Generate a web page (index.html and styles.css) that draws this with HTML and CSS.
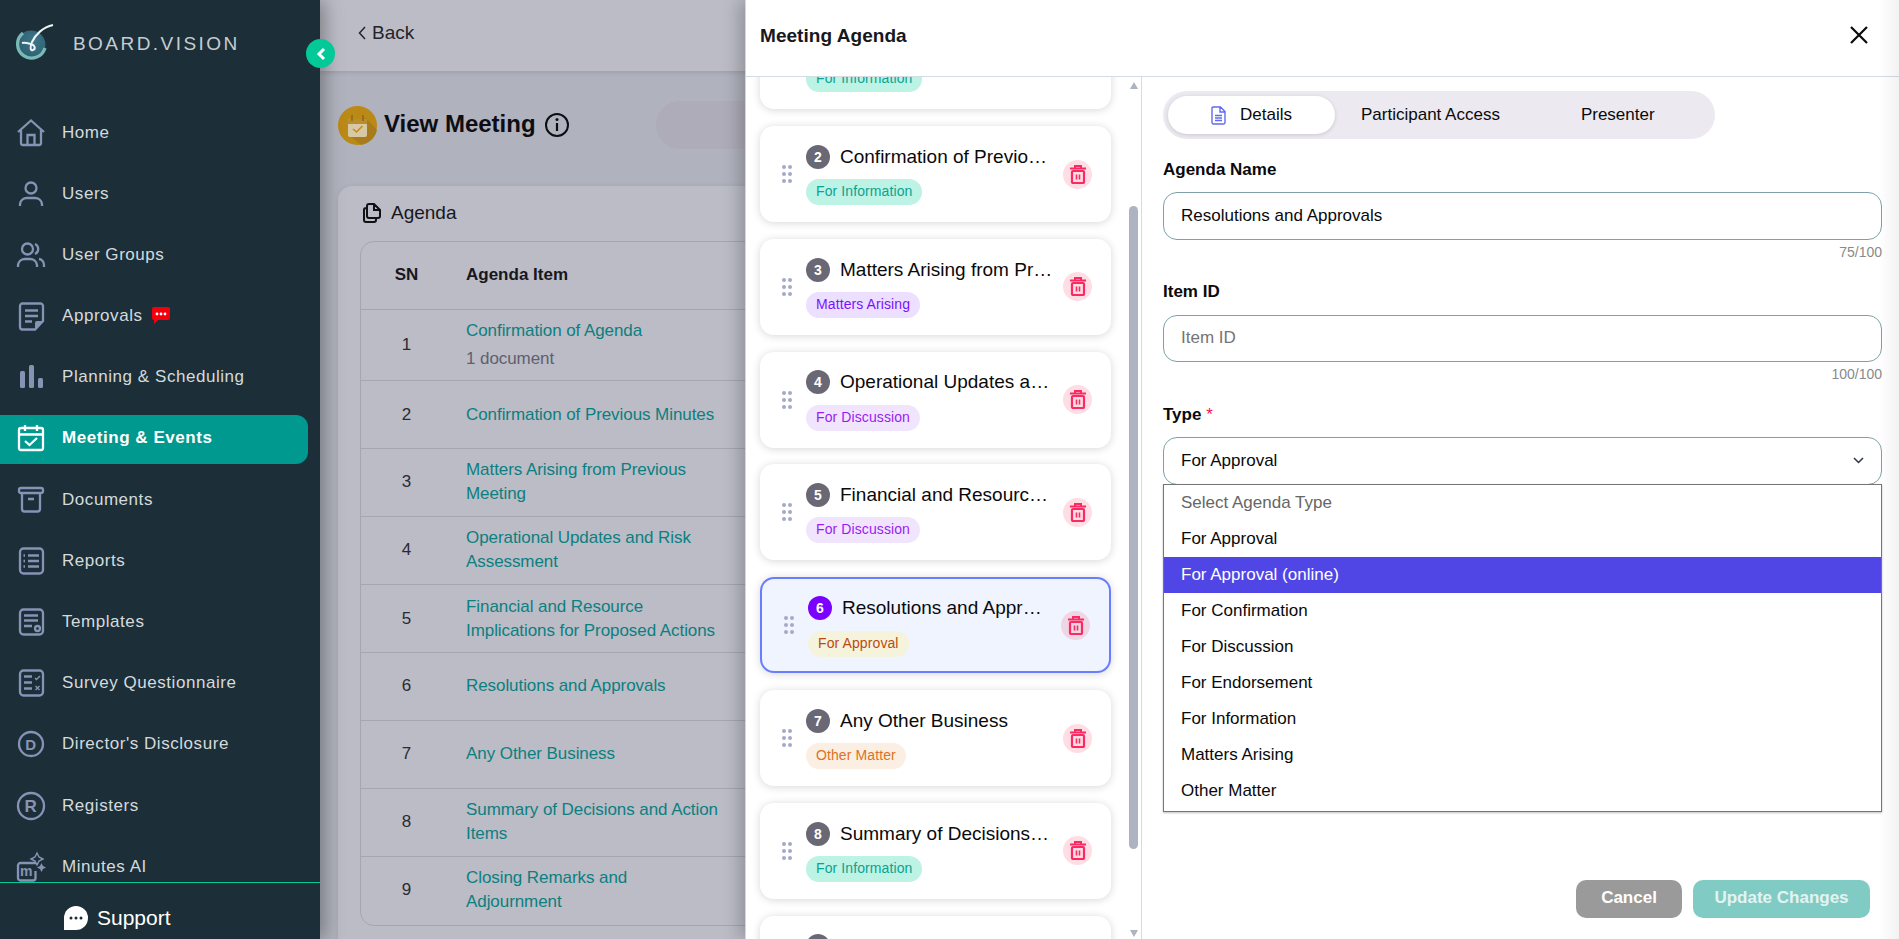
FILE: index.html
```html
<!DOCTYPE html>
<html>
<head>
    <meta charset="UTF-8">
    <title>Meeting Agenda</title>
    <link rel="stylesheet" href="styles.css">
</head>
<body>
    <svg class="sprite" width="0" height="0">
        <symbol id="trash" viewBox="0 0 16 19">
            <path d="M0 3.500H16M5 3V1H11V3" fill="none" stroke="currentColor" stroke-width="2"/>
            <rect x="2" y="6" width="12" height="12" rx="1" fill="none" stroke="currentColor" stroke-width="2.200"/>
            <path d="M6.500 9.500V14.500M9.500 9.500V14.500" fill="none" stroke="currentColor" stroke-width="1.600"/>
        </symbol>
        <symbol id="grip" viewBox="0 0 10 18">
            <circle cx="2" cy="2" r="2"/><circle cx="8" cy="2" r="2"/>
            <circle cx="2" cy="9" r="2"/><circle cx="8" cy="9" r="2"/>
            <circle cx="2" cy="16" r="2"/><circle cx="8" cy="16" r="2"/>
        </symbol>
    </svg>

    <div class="app">
        <aside class="sidebar">
            <div class="brand">
                <svg class="brand-logo" width="42" height="36" viewBox="0 0 42 36">
                    <defs>
                        <radialGradient id="globe" cx="0.6" cy="0.35" r="0.75">
                            <stop offset="0" stop-color="#3d7488"/>
                            <stop offset="1" stop-color="#2a5c6c"/>
                        </radialGradient>
                    </defs>
                    <circle cx="15" cy="21" r="14.500" fill="url(#globe)"/>
                    <path d="M7 9A14 14 0 1 0 29 24" fill="none" stroke="#82c4bf" stroke-width="3.200" opacity="0.9"/>
                    <path d="M37 1C27 3 19 11 16 18C14 23 14 27 17 26C20 25 19 21 15 20C13 19.500 9 18 6 19" fill="none" stroke="#eef5f4" stroke-width="2"/>
                </svg>
                <span class="brand-name">BOARD.VISION</span>
            </div>
            <nav class="nav">
                <a class="nav-item">
                    <svg class="nav-icon" viewBox="0 0 28 28"><path d="M1 13L14 1.500L27 13M4 10.500V24A2 2 0 0 0 6 26H22A2 2 0 0 0 24 24V10.500M10.500 26V16H17.500V26"/></svg>
                    <span>Home</span>
                </a>
                <a class="nav-item">
                    <svg class="nav-icon" viewBox="0 0 28 28"><circle cx="14" cy="8" r="5.500"/><path d="M3 26V24A7 7 0 0 1 10 18H18A7 7 0 0 1 25 24V26"/></svg>
                    <span>Users</span>
                </a>
                <a class="nav-item">
                    <svg class="nav-icon" viewBox="0 0 28 28"><circle cx="10.500" cy="8" r="5.500"/><path d="M1 26V24A7 7 0 0 1 8 18H13A7 7 0 0 1 20 24V26M18 3A5.500 5.500 0 0 1 18 13M22 18A6 6 0 0 1 27 24V26"/></svg>
                    <span>User Groups</span>
                </a>
                <a class="nav-item">
                    <svg class="nav-icon" viewBox="0 0 28 28"><path d="M26 19V4A2.500 2.500 0 0 0 23.500 1.500H5.500A2.500 2.500 0 0 0 3 4V25A2.500 2.500 0 0 0 5.500 27.500H18ZM8 8.500H21M8 14H21M8 19.500H15"/><path class="nav-fill" d="M26 19L18 27.500V21A2 2 0 0 1 20 19Z"/></svg>
                    <span>Approvals</span>
                    <svg class="chat-badge" width="18" height="18" viewBox="0 0 18 18">
                        <path d="M2 0H16A2 2 0 0 1 18 2V11A2 2 0 0 1 16 13H6L2 17V13A2 2 0 0 1 0 11V2A2 2 0 0 1 2 0Z" fill="#f3000f"/>
                        <circle cx="5" cy="7" r="1.400" fill="#fff"/><circle cx="9" cy="7" r="1.400" fill="#fff"/><circle cx="13" cy="7" r="1.400" fill="#fff"/>
                    </svg>
                </a>
                <a class="nav-item">
                    <svg class="nav-icon" viewBox="0 0 28 28"><rect class="nav-fill" x="3" y="8" width="5" height="17" rx="1.500"/><rect class="nav-fill" x="12" y="2" width="5" height="23" rx="1.500"/><rect class="nav-fill" x="21" y="15" width="5" height="10" rx="1.500"/></svg>
                    <span>Planning &amp; Scheduling</span>
                </a>
                <a class="nav-item active">
                    <svg class="nav-icon" viewBox="0 0 28 28"><rect x="2" y="4" width="24" height="22" rx="2"/><path d="M2 10.500H26M8 1V7M20 1V7M8 17L12.500 21L20 14"/></svg>
                    <span>Meeting &amp; Events</span>
                </a>
                <a class="nav-item">
                    <svg class="nav-icon" viewBox="0 0 28 28"><rect x="2" y="2" width="24" height="5" rx="2"/><path d="M5 7V23A2.500 2.500 0 0 0 7.500 25.500H20.500A2.500 2.500 0 0 0 23 23V7M11 13H17"/></svg>
                    <span>Documents</span>
                </a>
                <a class="nav-item">
                    <svg class="nav-icon" viewBox="0 0 28 28"><rect x="3" y="1.500" width="23" height="25" rx="3.500"/><path d="M11 8.500H22M11 14H22M11 19.500H22M6.500 8.500H8M6.500 14H8M6.500 19.500H8"/></svg>
                    <span>Reports</span>
                </a>
                <a class="nav-item">
                    <svg class="nav-icon" viewBox="0 0 28 28"><rect x="3" y="1.500" width="23" height="25" rx="3.500"/><path d="M7 7.500H21M7 12.500H21M7 18H15"/><circle cx="20.500" cy="20.500" r="2.500"/></svg>
                    <span>Templates</span>
                </a>
                <a class="nav-item">
                    <svg class="nav-icon" viewBox="0 0 28 28"><rect x="3" y="1.500" width="23" height="25" rx="3.500"/><path d="M7 7.500H15M7 13.500H15M7 19.500H15"/><path class="nav-thin" d="M18 9L19.500 10.500L23 7M18.500 17L22.500 21M22.500 17L18.500 21"/></svg>
                    <span>Survey Questionnaire</span>
                </a>
                <a class="nav-item">
                    <svg class="nav-icon" viewBox="0 0 28 28"><circle cx="14" cy="14" r="12"/><text class="nav-letter" x="14" y="19.500" font-size="15">D</text></svg>
                    <span>Director's Disclosure</span>
                </a>
                <a class="nav-item">
                    <svg class="nav-icon" viewBox="0 0 28 28"><circle cx="14" cy="14" r="13"/><text class="nav-letter" x="14" y="20" font-size="17">R</text></svg>
                    <span>Registers</span>
                </a>
                <a class="nav-item">
                    <svg class="nav-icon" viewBox="0 0 28 28"><path d="M19 10H3.500A2.500 2.500 0 0 0 1 12.500V25A2.500 2.500 0 0 0 3.500 27.500H16A2.500 2.500 0 0 0 18.500 25V18"/><text class="nav-letter" x="9.500" y="23" font-size="14">m</text><path class="nav-thin" d="M20 0L22 4L26 6L22 8L20 12L18 8L14 6L18 4Z"/><path class="nav-fill" d="M24.500 10L26 13L29 14.500L26 16L24.500 19L23 16L20 14.500L23 13Z"/></svg>
                    <span>Minutes AI</span>
                </a>
            </nav>
            <div class="support">
                <svg width="24" height="24" viewBox="0 0 24 24">
                    <path d="M12 0A12 12 0 1 1 12 24H0V12A12 12 0 0 1 12 0Z" fill="#fff"/>
                    <circle cx="7" cy="12" r="1.500" fill="#1c2f38"/><circle cx="12" cy="12" r="1.500" fill="#1c2f38"/><circle cx="17" cy="12" r="1.500" fill="#1c2f38"/>
                </svg>
                <span>Support</span>
            </div>
            <button class="collapse-toggle">
                <svg width="10" height="14" viewBox="0 0 10 14"><path d="M8 2L3 7L8 12" fill="none" stroke="#fff" stroke-width="3"/></svg>
            </button>
        </aside>

        <main class="main">
            <div class="topbar">
                <svg width="8" height="14" viewBox="0 0 8 14"><path d="M7 1L1.500 7L7 13" fill="none" stroke="#23242c" stroke-width="1.500"/></svg>
                <span>Back</span>
            </div>
            <div class="page-title">
                <svg width="39" height="39" viewBox="0 0 39 39">
                    <circle cx="19.500" cy="19.500" r="19.500" fill="#bb8916"/>
                    <path d="M10 15L28 12L39 24A19.500 19.500 0 0 1 23 39L10 28Z" fill="#a87c1c"/>
                    <path d="M12 13H27A2 2 0 0 1 29 15V29A2 2 0 0 1 27 31H12A2 2 0 0 1 10 29V15A2 2 0 0 1 12 13Z" fill="#d8c9a6"/>
                    <path d="M10 15A2 2 0 0 1 12 13H27A2 2 0 0 1 29 15V18H10Z" fill="#b98c2c"/>
                    <path d="M14 9V15M25 9V15" stroke="#8d6a1e" stroke-width="1.500"/>
                    <path d="M15 23L18.500 26L24.500 20" fill="none" stroke="#c68c18" stroke-width="1.600"/>
                </svg>
                <h1>View Meeting</h1>
                <svg class="info-icon" width="24" height="24" viewBox="0 0 24 24">
                    <circle cx="12" cy="12" r="11" fill="none" stroke="#0d0d12" stroke-width="2"/>
                    <path d="M12 10V18" stroke="#0d0d12" stroke-width="2.200"/>
                    <circle cx="12" cy="6.500" r="1.500" fill="#0d0d12"/>
                </svg>
                <div class="title-pill"></div>
            </div>
            <section class="agenda-card">
                <div class="agenda-head">
                    <svg width="18" height="20" viewBox="0 0 18 20">
                        <path d="M6 1H11L17 7V13A2 2 0 0 1 15 15H6A2 2 0 0 1 4 13V3A2 2 0 0 1 6 1Z M4 5H3A2 2 0 0 0 1 7V17A2 2 0 0 0 3 19H11A2 2 0 0 0 13 17V15 M11 1V7H17" fill="none" stroke="#101015" stroke-width="2"/>
                    </svg>
                    <span>Agenda</span>
                </div>
                <div class="table-box">
                    <table class="agenda-table">
                        <thead>
                            <tr><th class="col-sn">SN</th><th class="col-item">Agenda Item</th></tr>
                        </thead>
                        <tbody>
                            <tr class="row-first row-low"><td class="col-sn">1</td><td class="col-item"><a>Confirmation of Agenda</a><div class="doc-count">1 document</div></td></tr>
                            <tr class="row-low"><td class="col-sn">2</td><td class="col-item"><a>Confirmation of Previous Minutes</a></td></tr>
                            <tr><td class="col-sn">3</td><td class="col-item"><a>Matters Arising from Previous Meeting</a></td></tr>
                            <tr><td class="col-sn">4</td><td class="col-item"><a>Operational Updates and Risk Assessment</a></td></tr>
                            <tr class="row-low"><td class="col-sn">5</td><td class="col-item"><a>Financial and Resource Implications for Proposed Actions</a></td></tr>
                            <tr><td class="col-sn">6</td><td class="col-item"><a>Resolutions and Approvals</a></td></tr>
                            <tr><td class="col-sn">7</td><td class="col-item"><a>Any Other Business</a></td></tr>
                            <tr><td class="col-sn">8</td><td class="col-item"><a>Summary of Decisions and Action Items</a></td></tr>
                            <tr><td class="col-sn">9</td><td class="col-item"><a>Closing Remarks and Adjournment</a></td></tr>
                        </tbody>
                    </table>
                </div>
            </section>

            <div class="drawer">
                <header class="drawer-head">
                    <h2>Meeting Agenda</h2>
                    <svg width="18" height="18" viewBox="0 0 18 18"><path d="M1 1L17 17M17 1L1 17" stroke="#0a0a0a" stroke-width="2.200"/></svg>
                </header>
                <div class="drawer-body">
                    <div class="list-pane">
                        <div class="card-list">
                            <div class="card">
                                <svg class="grip"><use href="#grip"/></svg>
                                <div class="card-body">
                                    <div class="card-title"><span class="num">1</span><span class="name">Confirmation of Agenda</span></div>
                                    <span class="tag tag-info">For Information</span>
                                </div>
                                <div class="trash"><svg><use href="#trash"/></svg></div>
                            </div>
                            <div class="card">
                                <svg class="grip"><use href="#grip"/></svg>
                                <div class="card-body">
                                    <div class="card-title"><span class="num">2</span><span class="name">Confirmation of Previous Minutes</span></div>
                                    <span class="tag tag-info">For Information</span>
                                </div>
                                <div class="trash"><svg><use href="#trash"/></svg></div>
                            </div>
                            <div class="card">
                                <svg class="grip"><use href="#grip"/></svg>
                                <div class="card-body">
                                    <div class="card-title"><span class="num">3</span><span class="name">Matters Arising from Previous Meeting</span></div>
                                    <span class="tag tag-matters">Matters Arising</span>
                                </div>
                                <div class="trash"><svg><use href="#trash"/></svg></div>
                            </div>
                            <div class="card">
                                <svg class="grip"><use href="#grip"/></svg>
                                <div class="card-body">
                                    <div class="card-title"><span class="num">4</span><span class="name">Operational Updates and Risk Assessment</span></div>
                                    <span class="tag tag-discussion">For Discussion</span>
                                </div>
                                <div class="trash"><svg><use href="#trash"/></svg></div>
                            </div>
                            <div class="card">
                                <svg class="grip"><use href="#grip"/></svg>
                                <div class="card-body">
                                    <div class="card-title"><span class="num">5</span><span class="name">Financial and Resource Implications for Proposed Actions</span></div>
                                    <span class="tag tag-discussion">For Discussion</span>
                                </div>
                                <div class="trash"><svg><use href="#trash"/></svg></div>
                            </div>
                            <div class="card selected">
                                <svg class="grip"><use href="#grip"/></svg>
                                <div class="card-body">
                                    <div class="card-title"><span class="num">6</span><span class="name">Resolutions and Approvals</span></div>
                                    <span class="tag tag-approval">For Approval</span>
                                </div>
                                <div class="trash"><svg><use href="#trash"/></svg></div>
                            </div>
                            <div class="card">
                                <svg class="grip"><use href="#grip"/></svg>
                                <div class="card-body">
                                    <div class="card-title"><span class="num">7</span><span class="name">Any Other Business</span></div>
                                    <span class="tag tag-other">Other Matter</span>
                                </div>
                                <div class="trash"><svg><use href="#trash"/></svg></div>
                            </div>
                            <div class="card">
                                <svg class="grip"><use href="#grip"/></svg>
                                <div class="card-body">
                                    <div class="card-title"><span class="num">8</span><span class="name">Summary of Decisions and Action Items</span></div>
                                    <span class="tag tag-info">For Information</span>
                                </div>
                                <div class="trash"><svg><use href="#trash"/></svg></div>
                            </div>
                            <div class="card">
                                <svg class="grip"><use href="#grip"/></svg>
                                <div class="card-body">
                                    <div class="card-title"><span class="num">9</span><span class="name">Closing Remarks and Adjournment</span></div>
                                    <span class="tag tag-info">For Information</span>
                                </div>
                                <div class="trash"><svg><use href="#trash"/></svg></div>
                            </div>
                        </div>
                        <div class="scroll-rail">
                            <span class="arrow-up"></span>
                            <span class="thumb"></span>
                            <span class="arrow-down"></span>
                        </div>
                    </div>

                    <div class="form-pane">
                        <div class="tabs">
                            <div class="tab active">
                                <svg width="15" height="19" viewBox="0 0 15 19"><path d="M2 1H9.500L14 5.500V16.500A1.500 1.500 0 0 1 12.500 18H2.500A1.500 1.500 0 0 1 1 16.500V2A1 1 0 0 1 2 1ZM9 1V6H14M4 9.500H11M4 12H11M4 14.500H11" fill="none" stroke="#5f6cf0" stroke-width="1.400"/></svg>
                                Details
                            </div>
                            <div class="tab tab-access">Participant Access</div>
                            <div class="tab tab-presenter">Presenter</div>
                        </div>

                        <label class="field-label first">Agenda Name</label>
                        <input class="text-input" type="text" value="Resolutions and Approvals">
                        <div class="counter">75/100</div>

                        <label class="field-label">Item ID</label>
                        <input class="text-input" type="text" placeholder="Item ID">
                        <div class="counter">100/100</div>

                        <label class="field-label">Type <span class="req">*</span></label>
                        <div class="select-wrap">
                            <div class="select-box">
                                For Approval
                                <svg width="11" height="7" viewBox="0 0 11 7"><path d="M1 1L5.500 5.500L10 1" fill="none" stroke="#2b3440" stroke-width="1.500"/></svg>
                            </div>
                            <ul class="options">
                                <li class="muted">Select Agenda Type</li>
                                <li>For Approval</li>
                                <li class="hover">For Approval (online)</li>
                                <li>For Confirmation</li>
                                <li>For Discussion</li>
                                <li>For Endorsement</li>
                                <li>For Information</li>
                                <li>Matters Arising</li>
                                <li>Other Matter</li>
                            </ul>
                        </div>

                        <div class="form-actions">
                            <button class="btn btn-cancel">Cancel</button>
                            <button class="btn btn-update">Update Changes</button>
                        </div>
                    </div>
                </div>
            </div>
        </main>
    </div>
</body>
</html>
```
FILE: styles.css
```css
* {
    box-sizing: border-box;
}
html, body {
    margin: 0;
    height: 100%;
    overflow: hidden;
}
body {
    font-family: "Liberation Sans", Arial, sans-serif;
    font-size: 17px;
    color: #0a0a0a;
}
.sprite {
    position: absolute;
}
.app {
    display: flex;
    height: 100vh;
}

/* sidebar */
.sidebar {
    position: relative;
    z-index: 2;
    width: 320px;
    flex: none;
    display: flex;
    flex-direction: column;
    background-color: #1c2f38;
    box-shadow: 4px 0 18px rgba(0, 0, 0, 0.35);
}
.brand {
    display: flex;
    align-items: center;
    height: 109px;
    padding: 0 0 21px 16px;
    flex: none;
}
.brand-logo {
    flex: none;
    margin-top: -4px;
}
.brand-name {
    margin-left: 15px;
    font-size: 19px;
    letter-spacing: 2.45px;
    color: #c6cdd1;
}
.nav {
    flex: 1;
    min-height: 0;
    overflow: hidden;
    padding-right: 12px;
}
.nav-item {
    display: flex;
    align-items: center;
    height: 49px;
    margin-bottom: 12.2px;
    padding: 0 0 2px 17px;
    border-radius: 0 12px 12px 0;
    color: #d5dadd;
    letter-spacing: 0.55px;
}
.nav-item.active {
    background-color: #009990;
    color: #fff;
    font-weight: bold;
}
.nav-icon {
    width: 28px;
    height: 28px;
    flex: none;
    margin-right: 17px;
    fill: none;
    stroke: #8793b5;
    stroke-width: 2.3;
    overflow: visible;
}
.nav-item.active .nav-icon {
    stroke: #fff;
}
.nav-icon .nav-fill {
    fill: #8793b5;
    stroke: none;
}
.nav-icon .nav-thin {
    stroke-width: 1.4;
}
.nav-letter {
    fill: #8793b5;
    stroke: none;
    font-weight: bold;
    text-anchor: middle;
}
.chat-badge {
    margin: 0 0 0 9px;
}
.support {
    height: 57px;
    flex: none;
    display: flex;
    align-items: center;
    gap: 9px;
    padding: 14px 0 0 64px;
    border-top: 1px solid #05c998;
    background-color: #1c2f38;
    color: #fff;
    font-size: 21px;
}
.collapse-toggle {
    position: absolute;
    top: 39px;
    left: 306px;
    width: 29px;
    height: 29px;
    padding: 0;
    border: none;
    border-radius: 50%;
    background-color: #03c998;
    display: flex;
    align-items: center;
    justify-content: center;
}

/* dimmed page behind the drawer */
.main {
    position: relative;
    flex: 1;
    min-width: 0;
    overflow: hidden;
    background-color: #b0b2bd;
}
.topbar {
    height: 71px;
    display: flex;
    align-items: center;
    gap: 6px;
    padding: 0 0 6px 38px;
    background-color: #bbbcc6;
    box-shadow: 0 2px 4px rgba(0, 0, 0, 0.1);
    font-size: 19px;
    color: #23242c;
}
.page-title {
    display: flex;
    align-items: center;
    height: 48px;
    margin: 30px 0 0 18px;
}
.page-title h1 {
    margin: 0 0 2px 7px;
    font-size: 24px;
    color: #0d0d12;
}
.info-icon {
    margin-left: 9px;
}
.title-pill {
    width: 300px;
    height: 48px;
    margin-left: 87px;
    border-radius: 24px;
    background-color: #aeacb9;
}
.agenda-card {
    width: 1400px;
    margin: 37px 0 0 18px;
    padding: 14px 0 0 22px;
    height: 800px;
    border-radius: 14px;
    background-color: #bbbcc6;
    box-shadow: 0 0 4px rgba(0, 0, 0, 0.08);
}
.agenda-head {
    display: flex;
    align-items: center;
    gap: 10px;
    height: 26px;
    padding-left: 3px;
    margin-bottom: 15px;
    font-size: 19px;
    color: #17171d;
}
.table-box {
    border: 1px solid #a5a6b2;
    border-radius: 14px;
    overflow: hidden;
}
.agenda-table {
    border-collapse: separate;
    border-spacing: 0;
    table-layout: fixed;
    width: 100%;
}
.agenda-table th,
.agenda-table td {
    height: 68px;
    border-bottom: 1px solid #a5a6b2;
    padding: 0;
    line-height: 24px;
    font-size: 17px;
    color: #2a2a33;
}
.agenda-table tr:last-child td {
    border-bottom: none;
}
.agenda-table th {
    padding-bottom: 2px;
    color: #17171d;
    text-align: left;
}
.agenda-table .col-sn {
    width: 91px;
    text-align: center;
}
.agenda-table .col-item {
    padding-left: 14px;
    text-align: left;
}
.agenda-table td {
    padding-bottom: 1.5px;
}
.agenda-table .row-low td {
    padding-bottom: 0;
}
.agenda-table td.col-item {
    padding-right: 1015px;
    letter-spacing: -0.07px;
    color: #0c7f80;
}
.row-first td {
    height: 71px;
}
.doc-count {
    margin-top: 4px;
    color: #5f6070;
}

/* drawer */
.drawer {
    position: absolute;
    top: 0;
    right: 0;
    bottom: 0;
    width: 1154px;
    display: flex;
    flex-direction: column;
    background-color: #fff;
    border-left: 1px solid #d4d6dc;
    box-shadow: -6px 0 16px rgba(0, 0, 0, 0.22);
}
.drawer::after {
    content: "";
    position: absolute;
    top: 0;
    right: 0;
    bottom: 0;
    width: 20px;
    background: linear-gradient(to right, rgba(0, 0, 0, 0), rgba(0, 0, 0, 0.05));
    pointer-events: none;
}
.drawer-head {
    height: 77px;
    flex: none;
    display: flex;
    align-items: center;
    justify-content: space-between;
    padding: 0 31px 6px 14px;
    border-bottom: 1px solid #d4dbe2;
}
.drawer-head h2 {
    margin: 2px 0 0;
    font-size: 19px;
    letter-spacing: 0.05px;
    color: #17171d;
}
.drawer-body {
    flex: 1;
    min-height: 0;
    display: flex;
}
.list-pane {
    width: 396px;
    flex: none;
    display: flex;
    overflow: hidden;
    padding-left: 14px;
    border-right: 1px solid #d8dade;
}
.card-list {
    width: 351px;
    flex: none;
    margin-top: -63.83px;
    display: flex;
    flex-direction: column;
    gap: 16.83px;
}
.card {
    height: 96px;
    flex: none;
    display: flex;
    align-items: center;
    padding: 0 19px 0 22px;
    border-radius: 14px;
    background-color: #fff;
    box-shadow: 0 1px 8px rgba(0, 0, 0, 0.16);
}
.card.selected {
    border: 2px solid #6a7dff;
    background-color: #f0f4ff;
}
.grip {
    width: 10px;
    height: 18px;
    flex: none;
    margin-right: 14px;
    fill: #a5a9c8;
}
.card-body {
    flex: 1;
    min-width: 0;
    align-self: flex-start;
    padding: 18.7px 9px 0 0;
}
.card.selected .card-body {
    padding-top: 17px;
}
.card-title {
    display: flex;
    align-items: center;
    gap: 10px;
    height: 24px;
    margin-bottom: 10.3px;
}
.num {
    width: 24px;
    height: 24px;
    flex: none;
    display: flex;
    align-items: center;
    justify-content: center;
    border-radius: 50%;
    background-color: #6b6875;
    color: #fff;
    font-size: 14px;
    font-weight: bold;
}
.card.selected .num {
    background-color: #7a00ff;
}
.name {
    min-width: 0;
    flex: 1;
    font-size: 19px;
    white-space: nowrap;
    overflow: hidden;
    text-overflow: ellipsis;
}
.tag {
    display: inline-block;
    height: 26px;
    padding: 0 10px;
    border-radius: 13px;
    font-size: 14px;
    line-height: 25px;
    letter-spacing: 0.1px;
}
.tag-info {
    background-color: #bdf3e4;
    color: #0ca292;
}
.tag-matters {
    background-color: #ecdfff;
    color: #7a12ff;
}
.tag-discussion {
    background-color: #f0e5fd;
    color: #9a1cf5;
}
.tag-approval {
    background-color: #f5f3dc;
    color: #bb4a10;
}
.tag-other {
    background-color: #fbeee2;
    color: #e0711c;
}
.trash {
    width: 29px;
    height: 29px;
    flex: none;
    display: flex;
    align-items: center;
    justify-content: center;
    border-radius: 50%;
    background-color: #ffdde5;
    color: #fb2a62;
}
.card.selected .trash {
    background-color: #eed6e4;
}
.trash svg {
    width: 16px;
    height: 19px;
}

/* the list's scrollbar */
.scroll-rail {
    width: 9px;
    flex: none;
    margin-left: 18px;
    display: flex;
    flex-direction: column;
    align-items: center;
    padding: 5px 0 2px;
}
.arrow-up,
.arrow-down {
    width: 0;
    height: 0;
    flex: none;
    border-left: 4.5px solid transparent;
    border-right: 4.5px solid transparent;
}
.arrow-up {
    border-bottom: 7px solid #adb3c1;
}
.arrow-down {
    margin-top: auto;
    border-top: 7px solid #adb3c1;
}
.thumb {
    width: 9px;
    height: 643px;
    flex: none;
    margin-top: 117px;
    border-radius: 5px;
    background-color: #adb3c1;
}

/* form */
.form-pane {
    flex: 1;
    min-width: 0;
    display: flex;
    flex-direction: column;
    padding: 14px 17px 21px 21px;
}
.tabs {
    display: flex;
    align-items: center;
    width: 552px;
    height: 48px;
    flex: none;
    padding: 0 5px;
    border-radius: 24px;
    background-color: #ece9f0;
    font-size: 17px;
}
.tab {
    display: flex;
    align-items: center;
    justify-content: center;
    height: 38px;
    border-radius: 19px;
}
.tab.active {
    width: 167px;
    gap: 14px;
    background-color: #fff;
    box-shadow: 0 1px 4px rgba(0, 0, 0, 0.15);
}
.tab-access {
    margin-left: 26px;
}
.tab-presenter {
    margin-left: 81px;
}
.field-label {
    display: block;
    height: 20px;
    margin: 21.5px 0 13.5px;
    font-weight: bold;
    font-size: 17px;
    line-height: 21px;
}
.field-label.first {
    margin-top: 20px;
    margin-bottom: 13px;
}
.req {
    color: #f0144f;
    font-weight: normal;
}
.text-input {
    display: block;
    width: 100%;
    height: 47.5px;
    flex: none;
    padding: 0 17px;
    border: 1px solid #7fa0a8;
    border-radius: 14px;
    background-color: #fff;
    font-family: inherit;
    font-size: 17px;
    color: #0a0a0a;
}
.text-input::placeholder {
    color: #757575;
    opacity: 1;
}
.counter {
    height: 16px;
    margin-top: 4px;
    text-align: right;
    font-size: 14px;
    line-height: 16px;
    color: #8a8a8a;
}
.select-wrap {
    position: relative;
    flex: none;
}
.select-box {
    display: flex;
    align-items: center;
    justify-content: space-between;
    height: 47.5px;
    padding: 0 17px;
    border: 1px solid #7fa0a8;
    border-radius: 14px;
}
.options {
    position: absolute;
    z-index: 3;
    top: 47px;
    left: 0;
    right: 0;
    margin: 0;
    padding: 0 0 2px;
    list-style: none;
    background-color: #fff;
    border: 1px solid #767676;
    box-shadow: 0 1px 2px rgba(0, 0, 0, 0.25);
}
.options li {
    height: 36px;
    padding: 0 17px;
    line-height: 35px;
}
.options .muted {
    color: #666;
}
.options .hover {
    background-color: #4f46e5;
    color: #fff;
}
.form-actions {
    margin-top: auto;
    display: flex;
    justify-content: flex-end;
    gap: 11px;
    padding-right: 12px;
}
.btn {
    height: 38px;
    padding: 0 0 2px;
    border: none;
    border-radius: 10px;
    font-family: inherit;
    font-size: 17px;
    font-weight: bold;
}
.btn-cancel {
    width: 106px;
    background-color: #9a9a9a;
    color: #fff;
}
.btn-update {
    width: 177px;
    background-color: #80ccc5;
    color: #e3f3f1;
}
```
